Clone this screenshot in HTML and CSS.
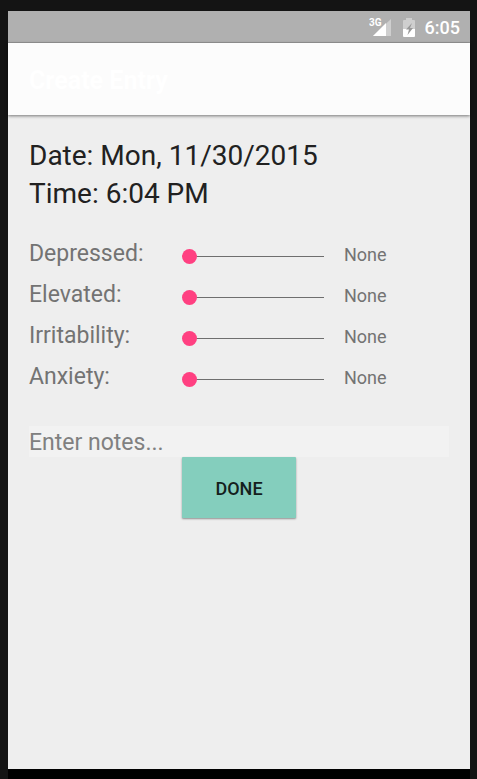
FILE: index.html
```html
<!DOCTYPE html>
<html lang="en">
<head>
  <meta charset="utf-8">
  <meta name="viewport" content="width=device-width, initial-scale=1">
  <title>Create Entry</title>
  <link rel="stylesheet" href="styles.css">
</head>
<body>
  <div class="screen">
    <div class="status-bar">
      <svg class="signal" width="23" height="20" viewBox="0 0 23 20" aria-hidden="true">
        <path d="M22 2v17H4z" fill="#cfcfcf"/>
        <path d="M17 6v13H4z" fill="#fff"/>
        <rect width="13" height="10" fill="#b0b0b0"/>
        <text class="network" x="0" y="9">3G</text>
      </svg>
      <svg class="battery" width="12" height="19" viewBox="0 0 12 19" aria-hidden="true">
        <path d="M0 3q0-1 1-1h2V0h6v2h2q1 0 1 1v8H0z" fill="#cfcfcf"/>
        <path d="M0 11h12v7q0 1-1 1H1q-1 0-1-1z" fill="#fff"/>
        <path d="M9 5L3 11.500h3L4.500 17 10 10H7z" fill="#999"/>
      </svg>
      <time class="clock">6:05</time>
    </div>
    <header class="app-bar">
      <h1 class="title">Create Entry</h1>
    </header>
    <main class="content">
      <p class="stamp">Date: Mon, 11/30/2015</p>
      <p class="stamp">Time: 6:04 PM</p>
      <form class="entry">
        <div class="row">
          <label for="depressed">Depressed:</label>
          <input class="slider" id="depressed" type="range" min="0" max="3" value="0">
          <output class="level" for="depressed">None</output>
        </div>
        <div class="row">
          <label for="elevated">Elevated:</label>
          <input class="slider" id="elevated" type="range" min="0" max="3" value="0">
          <output class="level" for="elevated">None</output>
        </div>
        <div class="row">
          <label for="irritability">Irritability:</label>
          <input class="slider" id="irritability" type="range" min="0" max="3" value="0">
          <output class="level" for="irritability">None</output>
        </div>
        <div class="row">
          <label for="anxiety">Anxiety:</label>
          <input class="slider" id="anxiety" type="range" min="0" max="3" value="0">
          <output class="level" for="anxiety">None</output>
        </div>
        <input class="notes" type="text" placeholder="Enter notes..." aria-label="Notes">
        <button class="done" type="button">DONE</button>
      </form>
    </main>
  </div>
</body>
</html>
```

FILE: styles.css
```css
* {
  box-sizing: border-box;
}

body {
  display: flex;
  flex-direction: column;
  min-height: 100vh;
  margin: 0;
  padding: 11px 7px 0 8px;
  background: #141414;
  font-family: Roboto, sans-serif;
}

.screen {
  flex: 1;
  display: flex;
  flex-direction: column;
  background: #eee;
  border-bottom: 10px solid #000;
}

.status-bar {
  display: flex;
  align-items: center;
  justify-content: flex-end;
  height: 32px;
  padding: 1px 10px 0 0;
  background: #b0b0b0;
  border-bottom: 1px solid #989898;
}

.signal {
  margin-right: 11px;
}

.network {
  fill: #fff;
  font-size: 10px;
  font-weight: 700;
}

.battery {
  margin-right: 10px;
}

.clock {
  color: #fff;
  font-size: 18px;
  font-weight: 500;
}

.app-bar {
  display: flex;
  align-items: center;
  height: 72px;
  padding: 2px 21px 0;
  background: #fcfcfc;
  box-shadow: 0 1px 3px rgba(0, 0, 0, 0.5);
}

.title {
  margin: 0;
  color: #fff;
  font-size: 25px;
  font-weight: 700;
}

.content {
  padding: 22px 21px 21px;
}

.stamp {
  margin: 0;
  color: #212121;
  font-size: 28px;
  line-height: 38px;
}

.entry {
  margin-top: 20px;
}

.row {
  display: grid;
  grid-template-columns: 153px 1fr 125px;
  align-items: baseline;
  height: 41px;
  color: #737373;
  font-size: 23px;
  line-height: 41px;
}

.slider {
  appearance: none;
  align-self: center;
  width: 100%;
  height: 15px;
  margin: 5px 0 0;
  background: linear-gradient(#6e6e6e, #6e6e6e) right center / calc(100% - 8px) 1px no-repeat;
}

.slider::-webkit-slider-thumb {
  appearance: none;
  width: 15px;
  height: 15px;
  border-radius: 50%;
  background: #ff4081;
}

.level {
  padding-left: 20px;
  font-size: 18px;
}

.notes {
  display: block;
  width: 100%;
  height: 31px;
  margin-top: 29px;
  padding: 2px 0 0;
  border: 0;
  background: #f2f2f2;
  color: #212121;
  font: 23px Roboto, sans-serif;
}

.notes::placeholder {
  color: #808080;
}

.done {
  display: block;
  width: 114px;
  height: 61px;
  margin: 0 auto;
  padding: 2px 0 0;
  border: 0;
  border-radius: 1px;
  background: #84cebd;
  box-shadow: 0 1px 2px rgba(0, 0, 0, 0.4);
  color: #14201d;
  font: 500 18px Roboto, sans-serif;
}
```
